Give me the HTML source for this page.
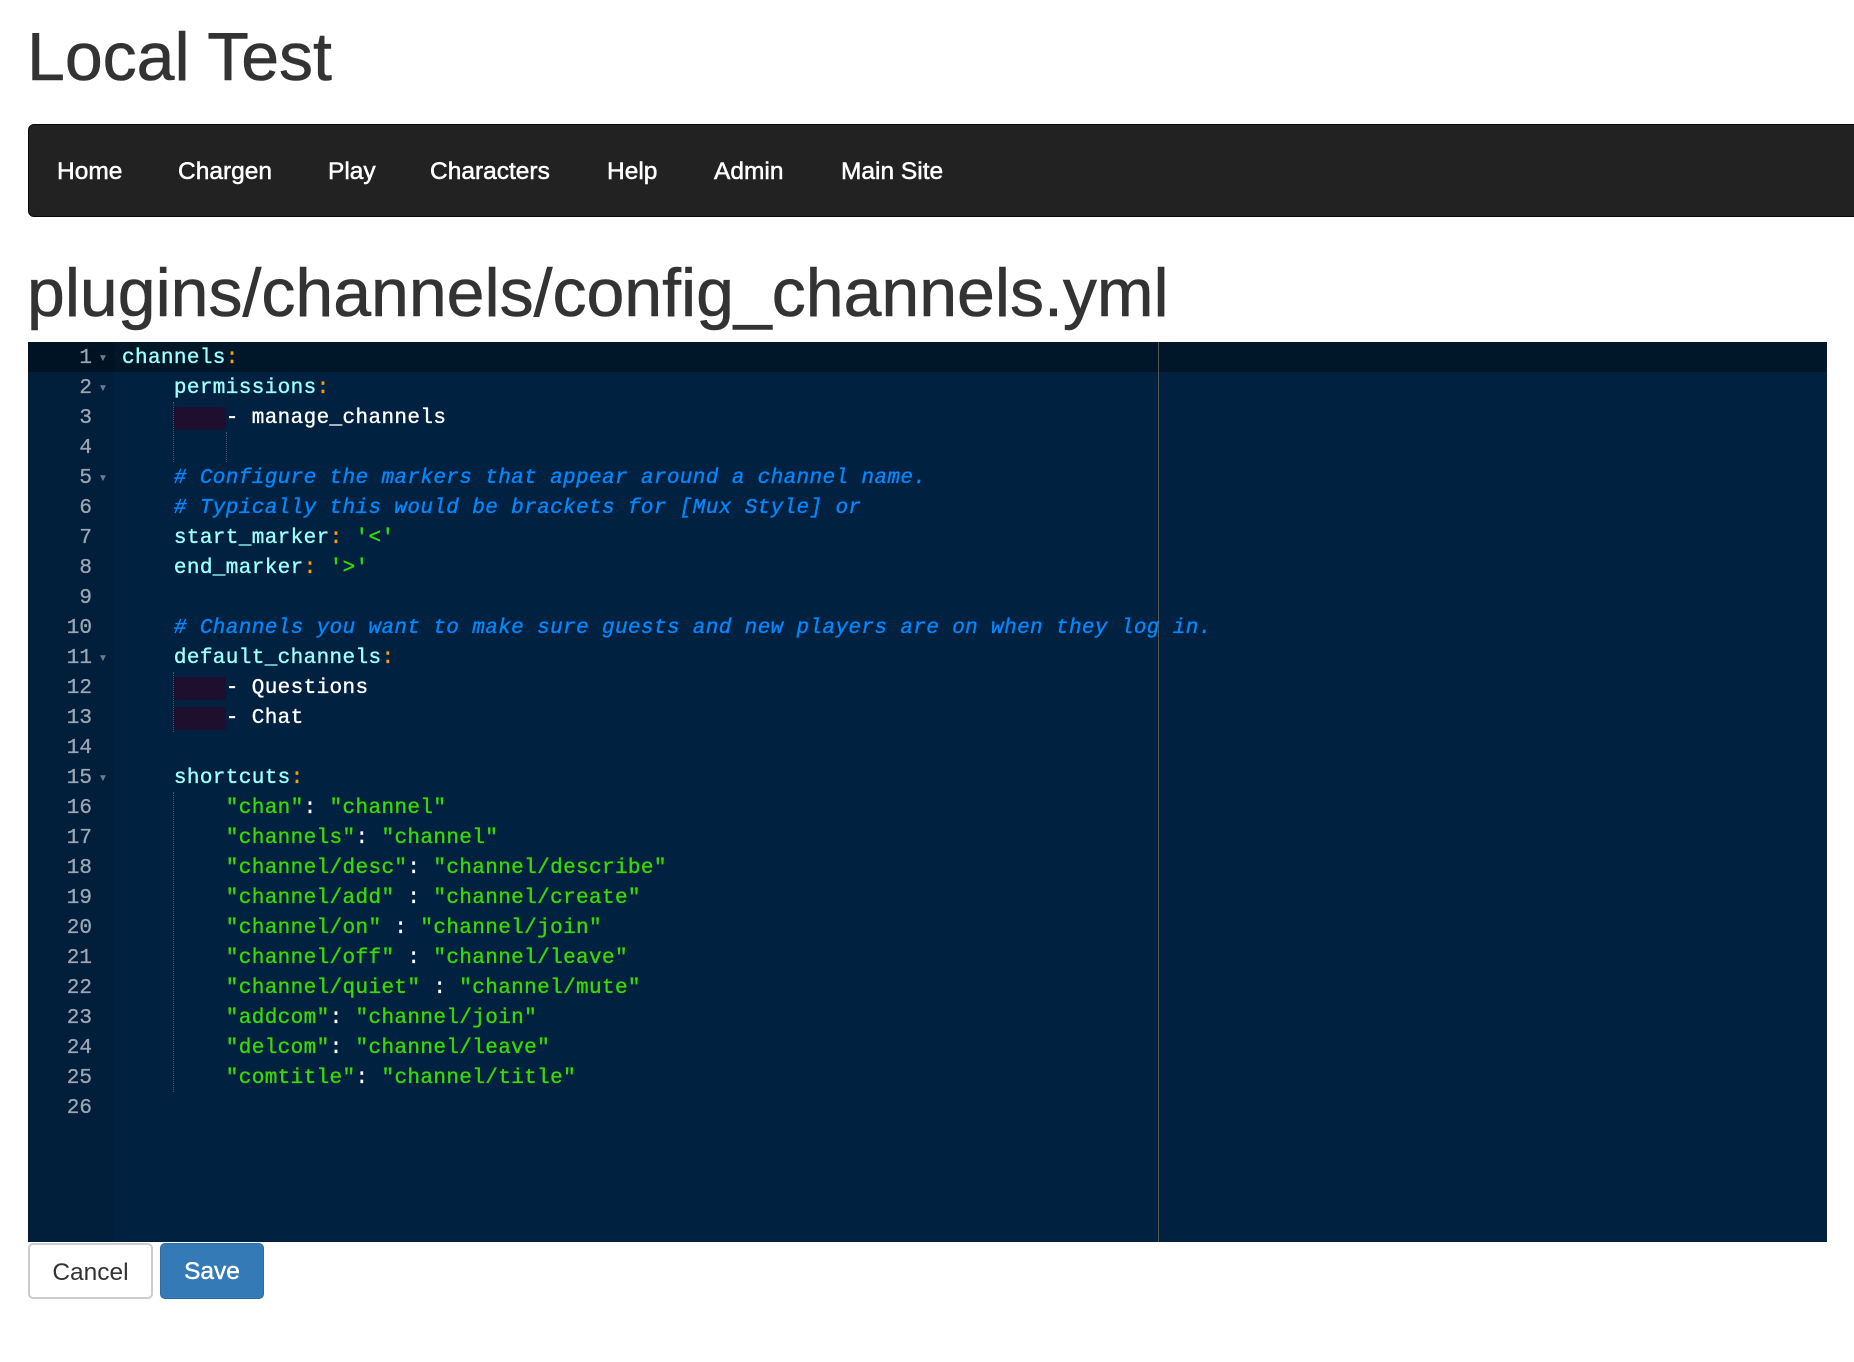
<!DOCTYPE html>
<html><head><meta charset="utf-8"><style>
*{margin:0;padding:0;box-sizing:border-box}
body{width:1854px;height:1362px;background:#fff;font-family:"Liberation Sans",Helvetica,Arial,sans-serif;color:#333;position:relative;overflow:hidden}
.t1{position:absolute;left:27px;top:19px;font-size:68px;line-height:76px;font-weight:500;-webkit-text-stroke:0.6px #333}
.nav{position:absolute;left:28px;top:124px;width:1840px;height:93px;background:#222;border:1px solid #080808;border-radius:6px 0 0 6px}
.nav span{position:absolute;top:32px;font-size:24.5px;color:#fff;line-height:30px;-webkit-text-stroke:0.5px #fff}
.t2{position:absolute;left:27px;top:255px;font-size:68px;line-height:76px;font-weight:500;-webkit-text-stroke:0.6px #333}
.ed{position:absolute;left:28px;top:342px;width:1799px;height:900px;background:#002240;overflow:hidden}
.gut{position:absolute;left:0;top:0;width:86px;height:900px;background:#011e3a}
.act{position:absolute;left:0;top:0;width:1799px;height:30px;background:rgba(0,0,0,.35)}
.pm{position:absolute;left:1130px;top:0;width:1px;height:900px;background:#555}
.ln{position:absolute;left:0;width:64px;text-align:right;color:#9aa6b2;font:21px/30px "Liberation Mono",monospace;-webkit-text-stroke:0.3px #9aa6b2;margin-top:2px}
.fd{position:absolute;left:70px;color:#6a7d90;font-size:10px;line-height:30px;margin-top:2px}
.code{position:absolute;left:94px;top:2px;font:21px/30px "Liberation Mono",monospace;letter-spacing:0.37px;color:#fff;white-space:pre;-webkit-text-stroke:0.35px}
.k{color:#9effff}.p{color:#ff9d00}.c{color:#0088ff;font-style:italic}.s{color:#3ad900}
.ig{position:absolute;width:1px;border-left:1px dotted #3c5a78}
.ws{background:#1e0f2e}
.btn{position:absolute;top:1243px;height:56px;font-size:24.5px;line-height:56px;text-align:center;border-radius:5px}
</style></head><body>
<div class="t1">Local Test</div>
<div class="nav">
<span style="left:28px">Home</span><span style="left:149px">Chargen</span><span style="left:299px">Play</span><span style="left:401px">Characters</span><span style="left:578px">Help</span><span style="left:685px">Admin</span><span style="left:812px">Main Site</span>
</div>
<div class="t2">plugins/channels/config_channels.yml</div>
<div class="ed">
<div class="gut"></div>
<div class="act"></div>
<div class="pm"></div>
<div class="ln" style="top:0">1</div><div class="ln" style="top:30px">2</div><div class="ln" style="top:60px">3</div><div class="ln" style="top:90px">4</div><div class="ln" style="top:120px">5</div><div class="ln" style="top:150px">6</div><div class="ln" style="top:180px">7</div><div class="ln" style="top:210px">8</div><div class="ln" style="top:240px">9</div><div class="ln" style="top:270px">10</div><div class="ln" style="top:300px">11</div><div class="ln" style="top:330px">12</div><div class="ln" style="top:360px">13</div><div class="ln" style="top:390px">14</div><div class="ln" style="top:420px">15</div><div class="ln" style="top:450px">16</div><div class="ln" style="top:480px">17</div><div class="ln" style="top:510px">18</div><div class="ln" style="top:540px">19</div><div class="ln" style="top:570px">20</div><div class="ln" style="top:600px">21</div><div class="ln" style="top:630px">22</div><div class="ln" style="top:660px">23</div><div class="ln" style="top:690px">24</div><div class="ln" style="top:720px">25</div><div class="ln" style="top:750px">26</div>
<div class="fd" style="top:0">▼</div><div class="fd" style="top:30px">▼</div><div class="fd" style="top:120px">▼</div><div class="fd" style="top:300px">▼</div><div class="fd" style="top:420px">▼</div>
<div class="ig" style="left:145px;top:60px;height:60px"></div>
<div class="ig" style="left:198px;top:90px;height:30px"></div>
<div class="ig" style="left:145px;top:330px;height:60px"></div>
<div class="ig" style="left:145px;top:450px;height:300px"></div>
<div class="code"><span class="k">channels</span><span class="p">:</span>
    <span class="k">permissions</span><span class="p">:</span>
    <span class="ws">    </span>- manage_channels

    <span class="c"># Configure the markers that appear around a channel name.</span>
    <span class="c"># Typically this would be brackets for [Mux Style] or</span>
    <span class="k">start_marker</span><span class="p">:</span> <span class="s">'&lt;'</span>
    <span class="k">end_marker</span><span class="p">:</span> <span class="s">'&gt;'</span>

    <span class="c"># Channels you want to make sure guests and new players are on when they log in.</span>
    <span class="k">default_channels</span><span class="p">:</span>
    <span class="ws">    </span>- Questions
    <span class="ws">    </span>- Chat

    <span class="k">shortcuts</span><span class="p">:</span>
        <span class="s">"chan"</span>: <span class="s">"channel"</span>
        <span class="s">"channels"</span>: <span class="s">"channel"</span>
        <span class="s">"channel/desc"</span>: <span class="s">"channel/describe"</span>
        <span class="s">"channel/add"</span> : <span class="s">"channel/create"</span>
        <span class="s">"channel/on"</span> : <span class="s">"channel/join"</span>
        <span class="s">"channel/off"</span> : <span class="s">"channel/leave"</span>
        <span class="s">"channel/quiet"</span> : <span class="s">"channel/mute"</span>
        <span class="s">"addcom"</span>: <span class="s">"channel/join"</span>
        <span class="s">"delcom"</span>: <span class="s">"channel/leave"</span>
        <span class="s">"comtitle"</span>: <span class="s">"channel/title"</span>
</div>
</div>
<div class="btn" style="left:28px;width:125px;border:2px solid #ccc;color:#333;background:#fff">Cancel</div>
<div class="btn" style="left:160px;width:104px;background:#337ab7;border:1px solid #2e6da4;color:#fff;-webkit-text-stroke:0.4px #fff">Save</div>
</body></html>
